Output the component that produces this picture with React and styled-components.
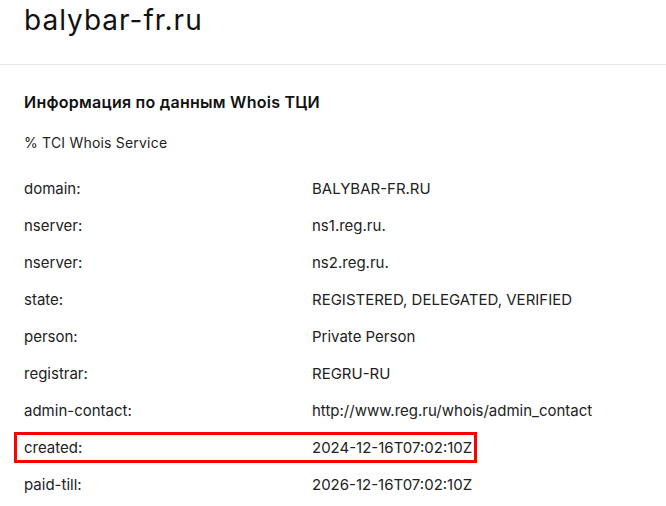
import React from "react"
import styled, { createGlobalStyle } from 'styled-components'

const Global = createGlobalStyle`
body {
  margin: 0;
  background: #fff;
  font-family: Inter, "Noto Sans", sans-serif;
  color: #1f1f1f;
}
`;

const rows = [
    ["domain:", "BALYBAR-FR.RU"],
    ["nserver:", "ns1.reg.ru."],
    ["nserver:", "ns2.reg.ru."],
    ["state:", "REGISTERED, DELEGATED, VERIFIED"],
    ["person:", "Private Person"],
    ["registrar:", "REGRU-RU"],
    ["admin-contact:", "http://www.reg.ru/whois/admin_contact"],
    ["created:", "2024-12-16T07:02:10Z"],
    ["paid-till:", "2026-12-16T07:02:10Z"],
]

const App = () => {
    return (
        <Page>
            <Global />
            <Header>
                <Domain>balybar-fr.ru</Domain>
            </Header>
            <Section>
                <Heading>Информация по данным Whois ТЦИ</Heading>
                <Note>% TCI Whois Service</Note>
                <Table>
                    {rows.map(([k, v], i) => (
                        <Row key={i} $marked={k === "created:"}>
                            <Label>{k}</Label>
                            <Value>{v}</Value>
                        </Row>
                    ))}
                </Table>
            </Section>
        </Page>
    )
}

export default App;

const Page = styled.div`
width: 666px;
height: 506px;
overflow: hidden;
`;

const Header = styled.div`
height: 64px;
border-bottom: 1px solid #e6e8e6;
padding-left: 24px;
display: flex;
align-items: flex-start;
`;

const Domain = styled.h1`
margin: 0;
margin-top: 3px;
font-size: 28px;
line-height: 34px;
font-weight: 400;
color: #111;
letter-spacing: 1px;
`;

const Section = styled.div`
padding: 0 24px;
`;

const Heading = styled.h2`
margin: 0;
margin-top: 26px;
font-size: 16px;
line-height: 22px;
font-weight: 600;
color: #111;
letter-spacing: 0.25px;
`;

const Note = styled.div`
margin-top: 20px;
font-size: 14px;
line-height: 20px;
color: #222;
letter-spacing: 0.2px;
`;

const Table = styled.div`
margin-top: 17px;
display: flex;
flex-direction: column;
`;

const Row = styled.div`
position: relative;
display: grid;
grid-template-columns: 288px 1fr;
height: 37px;
align-items: center;
font-size: 15px;
color: #222;
&::before {
  content: "";
  display: ${p => p.$marked ? "block" : "none"};
  position: absolute;
  left: -10px;
  top: 3px;
  width: 463px;
  height: 31px;
  box-sizing: border-box;
  border: 3px solid #ff0000;
}
`;

const Label = styled.span``;

const Value = styled.span``;
